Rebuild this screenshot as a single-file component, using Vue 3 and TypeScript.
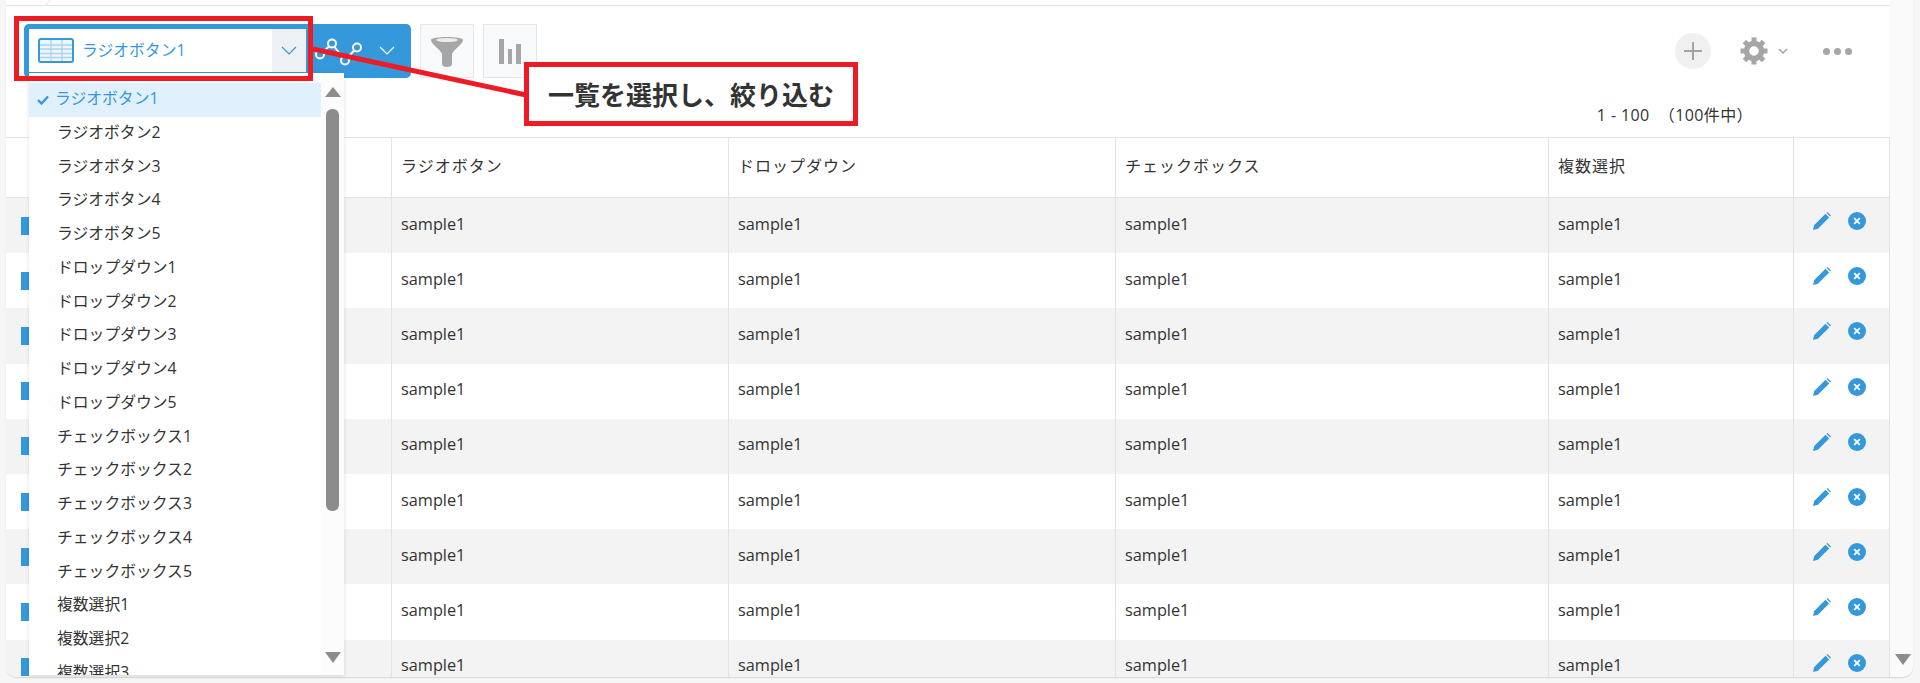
<script setup lang="ts">
const views = [
  "ラジオボタン1", "ラジオボタン2", "ラジオボタン3", "ラジオボタン4", "ラジオボタン5",
  "ドロップダウン1", "ドロップダウン2", "ドロップダウン3", "ドロップダウン4", "ドロップダウン5",
  "チェックボックス1", "チェックボックス2", "チェックボックス3", "チェックボックス4", "チェックボックス5",
  "複数選択1", "複数選択2", "複数選択3",
];
const columns = ["ラジオボタン", "ドロップダウン", "チェックボックス", "複数選択"];
const rows = 9;
const gearTeeth = [0, 45, 90, 135, 180, 225, 270, 315];
</script>

<template>
  <div class="page">
    <div class="panel">
      <main class="content">
        <svg class="crumb" width="6" height="6" viewBox="0 0 6 6"><path d="M5 0 1 5" stroke="#e3e3e3" fill="none" /></svg>
        <div class="toolbar">
          <div class="view-group">
            <div class="view-select">
              <svg class="table-icon" width="36" height="25" viewBox="0 0 36 25">
                <rect x="1" y="1" width="34" height="23" rx="2" fill="#eef6fc" stroke="#3498db" stroke-width="2" />
                <path d="M2 7h32M2 11h32M2 15.500h32M2 19.500h32M13 2v21M24 2v21" stroke="#a9d3ef" stroke-width="1.300" fill="none" />
              </svg>
              <span class="view-name">ラジオボタン1</span>
              <span class="view-arrow">
                <svg width="16" height="10" viewBox="0 0 16 10"><path d="M1 1l7 7 7-7" stroke="#3498db" stroke-width="1.200" fill="none" /></svg>
              </span>
            </div>
            <div class="graph-part">
              <svg width="50" height="30" viewBox="0 0 50 30">
                <g fill="none" stroke="#fff" stroke-width="2">
                  <circle cx="6" cy="18.500" r="4" />
                  <circle cx="18" cy="7.500" r="4" />
                  <circle cx="31" cy="24.500" r="4" />
                  <circle cx="43" cy="11.500" r="4" />
                  <path d="M9 15.500l6-5M20.500 11l8 10M34 21.500l6-7" />
                </g>
              </svg>
              <svg width="16" height="9" viewBox="0 0 16 9"><path d="M1 1l7 7 7-7" stroke="#fff" stroke-width="1.200" fill="none" /></svg>
            </div>
          </div>
          <button class="tool-btn">
            <svg width="32" height="31" viewBox="0 0 32 31">
              <path d="M0 4C0 0 32 0 32 4c0 4-9 9-11 14v10c0 4-10 4-10 0V18C9 13 0 8 0 4z" fill="#a6a6a6" />
              <ellipse cx="16" cy="4" rx="11" ry="2" fill="#ececec" />
            </svg>
          </button>
          <button class="tool-btn">
            <svg width="22" height="25" viewBox="0 0 22 25"><path d="M0 0h5v25H0zM9 10h4v15H9zM17 5h5v20h-5z" fill="#a6a6a6" /></svg>
          </button>
          <div class="toolbar-right">
            <span class="add-btn">
              <svg width="18" height="18" viewBox="0 0 18 18"><path d="M9 0v18M0 9h18" stroke="#a3a3a3" stroke-width="2" fill="none" /></svg>
            </span>
            <span class="gear-btn">
              <svg width="28" height="28" viewBox="0 0 28 28">
                <circle cx="14" cy="14" r="7.500" fill="none" stroke="#a6a6a6" stroke-width="5.500" />
                <rect v-for="a in gearTeeth" :key="a" x="11.500" y="0.500" width="5" height="6" fill="#a6a6a6" :transform="`rotate(${a} 14 14)`" />
              </svg>
              <svg width="10" height="6" viewBox="0 0 10 6"><path d="M1 1l4 4 4-4" stroke="#a6a6a6" stroke-width="1.600" fill="none" /></svg>
            </span>
            <span class="more-btn"><i></i><i></i><i></i></span>
          </div>
        </div>
        <div class="pager">1 - 100 &nbsp;（100件中）</div>
        <div class="record-table">
          <div class="cell head first"></div>
          <div v-for="c in columns" :key="c" class="cell head">{{ c }}</div>
          <div class="cell head"></div>
          <template v-for="n in rows" :key="n">
            <div class="cell first" :class="{ odd: n % 2 === 1 }"><span class="mark"></span></div>
            <div v-for="c in columns" :key="c" class="cell" :class="{ odd: n % 2 === 1 }">sample1</div>
            <div class="cell actions" :class="{ odd: n % 2 === 1 }">
              <svg width="18" height="18" viewBox="0 0 19 19">
                <path fill="#3498db" d="M0 19l1.300-5.200L13.200 1.900l3.900 3.900L5.200 17.700zM14.200.9l1-.9 3.800 3.800-.9 1z" />
              </svg>
              <svg width="18" height="18" viewBox="0 0 18 18">
                <circle cx="9" cy="9" r="9" fill="#3498db" />
                <path d="M6.200 6.200l5.600 5.600M11.800 6.200l-5.600 5.600" stroke="#fff" stroke-width="1.800" />
              </svg>
            </div>
          </template>
        </div>
      </main>
      <aside class="gutter"><span class="arrow-down"></span></aside>
    </div>

    <div class="view-menu">
      <div class="menu-list">
        <div v-for="(v, i) in views" :key="v" class="menu-item" :class="{ selected: i === 0 }">
          <svg v-if="i === 0" class="check" width="12" height="10" viewBox="0 0 12 10"><path d="M1 5l3.500 3.500L11 1.500" stroke="#3498db" stroke-width="2.400" fill="none" /></svg>
          {{ v }}
        </div>
      </div>
      <div class="menu-scroll">
        <span class="arrow-up"></span>
        <span class="thumb"></span>
        <span class="arrow-down menu-down"></span>
      </div>
    </div>

    <svg class="leader" width="1920" height="683" viewBox="0 0 1920 683">
      <path d="M313 49 526 95" stroke="#ed1c24" stroke-width="5" fill="none" />
    </svg>
    <div class="mark-box"></div>
    <div class="callout">一覧を選択し、絞り込む</div>
  </div>
</template>

<style scoped>
.page {
  position: relative;
  height: 683px;
  overflow: hidden;
  padding: 0 7px 0 6px;
  box-sizing: border-box;
  background: #f6f6f6;
  font-family: "Open Sans", "Noto Sans CJK JP", sans-serif;
  color: #333;
}
.panel {
  display: flex;
  height: 677px;
  background: #fafafa;
  border-radius: 0 0 10px 10px;
  box-shadow: 0 1px 1px #d8d8d8;
  overflow: hidden;
}
.content {
  position: relative;
  flex: 1;
  min-width: 0;
  background: #fff;
  padding-top: 5px;
  overflow: hidden;
}
.crumb {
  position: absolute;
  left: 39px;
  top: 0;
}
.gutter {
  position: relative;
  width: 23px;
  flex: none;
}
.toolbar {
  display: flex;
  align-items: flex-start;
  height: 74px;
  padding: 18px 0 0 18px;
  box-sizing: border-box;
  border-top: 1px solid #e3e3e3;
}
.view-group {
  display: flex;
  width: 387px;
  height: 54px;
  background: #3498db;
  border-radius: 5px;
  box-sizing: border-box;
  padding: 5px 0 6px 5px;
}
.view-select {
  display: flex;
  align-items: center;
  width: 277px;
  flex: none;
  background: #fff;
  padding-left: 9px;
  box-sizing: border-box;
}
.table-icon {
  margin-right: 8px;
}
.view-name {
  flex: 1;
  padding-bottom: 2px;
  color: #3498db;
  font-size: 15.800px;
}
.view-arrow {
  display: flex;
  align-items: center;
  justify-content: center;
  width: 34px;
  height: 100%;
  background: #edf1f4;
}
.graph-part {
  display: flex;
  align-items: center;
  gap: 15px;
  padding-left: 8px;
}
.tool-btn {
  display: flex;
  align-items: center;
  justify-content: center;
  width: 54px;
  height: 54px;
  margin-left: 9px;
  padding: 0;
  background: #f7f9fa;
  border: 1px solid #e3e7e8;
  box-sizing: border-box;
}
.toolbar-right {
  display: flex;
  align-items: center;
  margin-left: auto;
  height: 54px;
  padding-right: 38px;
}
.add-btn {
  display: flex;
  align-items: center;
  justify-content: center;
  width: 36px;
  height: 36px;
  border-radius: 50%;
  background: #f0f0f0;
}
.gear-btn {
  display: flex;
  align-items: center;
  gap: 10px;
  margin-left: 29px;
}
.more-btn {
  display: flex;
  gap: 4px;
  margin-left: 35px;
}
.more-btn i {
  width: 7px;
  height: 7px;
  border-radius: 50%;
  background: #a6a6a6;
}
.pager {
  height: 59px;
  padding: 25px 137px 0 0;
  box-sizing: border-box;
  text-align: right;
  font-size: 16px;
  line-height: 22px;
  letter-spacing: 0.4px;
}
.record-table {
  display: grid;
  grid-template-columns: 386px 337px 387px 433px 245px 96px;
  grid-template-rows: 60px repeat(9, 55.200px);
  border-top: 1px solid #e3e3e3;
  margin-top: -1px;
}
.cell {
  display: flex;
  align-items: center;
  padding: 0 0 4px 9px;
  border-right: 1px solid #e3e3e3;
  border-bottom: 1px solid #e3e3e3;
  font-size: 16.300px;
  box-sizing: border-box;
}
.cell:not(.head) {
  border-bottom: none;
}
.head {
  padding-bottom: 5px;
  font-size: 16px;
  letter-spacing: 1px;
}
.odd {
  background: #f3f3f3;
}
.first {
  padding: 0 0 0 15px;
}
.mark {
  width: 8px;
  height: 18px;
  background: #3498db;
}
.actions {
  gap: 17px;
  padding: 0 0 4px 19px;
}
.actions svg {
  margin-bottom: 5px;
}
.view-menu {
  position: absolute;
  left: 29px;
  top: 73px;
  display: flex;
  width: 315px;
  height: 602px;
  background: #fff;
  box-shadow: 0 1px 4px rgba(0, 0, 0, 0.12);
  overflow: hidden;
}
.menu-list {
  width: 292px;
  padding-top: 10px;
  box-sizing: border-box;
}
.menu-item {
  position: relative;
  height: 33.750px;
  line-height: 31.500px;
  padding-left: 28px;
  font-size: 15.800px;
}
.selected {
  padding-left: 26px;
  background: #e0f0fc;
  color: #3498db;
}
.check {
  position: absolute;
  left: 8px;
  top: 12px;
}
.menu-scroll {
  position: relative;
  flex: 1;
  background: #fcfcfc;
}
.arrow-up {
  position: absolute;
  left: 4px;
  top: 14px;
  border: 8px solid transparent;
  border-top: 0;
  border-bottom: 10px solid #8c8c8c;
}
.thumb {
  position: absolute;
  left: 5px;
  top: 36px;
  width: 13px;
  height: 402px;
  border-radius: 6px;
  background: #8c8c8c;
}
.arrow-down {
  position: absolute;
  left: 5px;
  bottom: 12px;
  border: 8px solid transparent;
  border-bottom: 0;
  border-top: 11px solid #8c8c8c;
}
.menu-down {
  left: 4px;
}
.leader {
  position: absolute;
  left: 0;
  top: 0;
  pointer-events: none;
}
.mark-box {
  position: absolute;
  left: 14px;
  top: 16px;
  width: 299px;
  height: 65px;
  border: 5px solid #ed1c24;
  box-sizing: border-box;
}
.callout {
  position: absolute;
  left: 524px;
  top: 62px;
  display: flex;
  align-items: center;
  justify-content: center;
  width: 334px;
  height: 64px;
  border: 5px solid #ed1c24;
  box-sizing: border-box;
  background: #fff;
  font-size: 26px;
  font-weight: 700;
  color: #333;
}
</style>
